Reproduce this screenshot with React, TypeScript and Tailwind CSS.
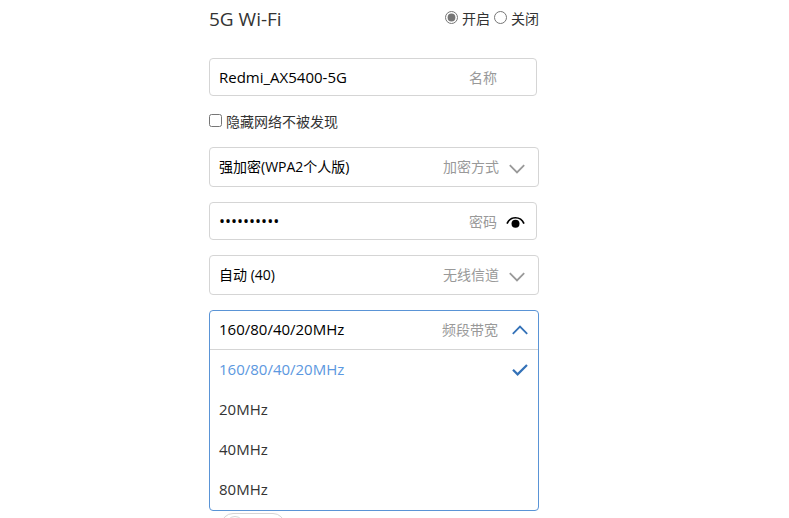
import React from 'react';

const CHANNELS = ['自动 (40)', '36', '40', '44', '48', '149', '153'];
const ENCRYPTIONS = ['强加密(WPA2个人版)', '混合加密(WPA/WPA2个人版)', '无加密'];
const BANDWIDTHS = ['160/80/40/20MHz', '20MHz', '40MHz', '80MHz'];

const Chevron: React.FC<{ className: string }> = ({ className }) => (
  <svg viewBox="0 0 16 10" className={className} fill="none" stroke="currentColor" strokeWidth="1.8" aria-hidden="true">
    <path d="M0.8 1.2 8 8.4 15.2 1.2" />
  </svg>
);

const SelectField: React.FC<{ id: string; label: string; options: string[] }> = ({ id, label, options }) => (
  <div className="relative h-10">
    <select
      id={id}
      className="w-full h-full appearance-none rounded border border-[#d5d5d5] bg-white pl-[9px] pr-[100px] text-sm text-black outline-none"
    >
      {options.map((option) => (
        <option key={option}>{option}</option>
      ))}
    </select>
    <label htmlFor={id} className="pointer-events-none absolute right-10 top-[10px] text-sm text-[#999]">
      {label}
    </label>
    <Chevron className="pointer-events-none absolute right-[14px] top-[17px] w-4 h-[10px] text-[#999]" />
  </div>
);

const BandwidthSelect: React.FC = () => {
  const [isOpen, setIsOpen] = React.useState(true);
  const [value, setValue] = React.useState(BANDWIDTHS[0]);

  return (
    <div className="rounded border border-[#5a94d6] bg-white">
      <button
        type="button"
        aria-haspopup="listbox"
        aria-expanded={isOpen}
        onClick={() => setIsOpen(!isOpen)}
        className="flex w-full h-[38px] items-center pl-[9px] pr-[10px] text-left"
      >
        <span className="flex-1 text-[15px] text-black">{value}</span>
        <span className="mr-[14px] text-sm text-[#999]">频段带宽</span>
        <Chevron className="w-4 h-[10px] rotate-180 text-[#3472b8]" />
      </button>
      {isOpen && (
        <ul role="listbox" aria-label="频段带宽" className="border-t border-[#d5d5d5]">
          {BANDWIDTHS.map((option) => (
            <li key={option} role="option" aria-selected={option === value}>
              <button
                type="button"
                onClick={() => setValue(option)}
                className={`flex w-full h-10 items-center justify-between pl-[9px] pr-[10px] text-[15px] ${option === value ? 'text-[#5c98e0]' : 'text-[#333]'}`}
              >
                {option}
                {option === value && (
                  <svg viewBox="0 0 16 12" className="w-4 h-3 text-[#3472b8]" fill="none" stroke="currentColor" strokeWidth="2.2" aria-hidden="true">
                    <path d="M1 5.8 5.6 10.4 15 1" />
                  </svg>
                )}
              </button>
            </li>
          ))}
        </ul>
      )}
    </div>
  );
};

const App: React.FC = () => {
  const [showPassword, setShowPassword] = React.useState(false);

  return (
    <div className="max-h-screen overflow-hidden bg-white pl-[209px] font-['Open_Sans','Noto_Sans_CJK_SC',sans-serif] text-sm text-[#333]">
      <form className="w-full max-w-[330px]">
        {/* Header */}
        <div className="flex h-[58px] items-start justify-between pt-[5px]">
          <h2 className="text-[19px] leading-7">5G Wi-Fi</h2>
          <div className="flex gap-1 leading-7">
            <label className="flex items-center gap-1">
              <input type="radio" name="wifi" defaultChecked className="mb-[3px] w-[13px] h-[13px] accent-[#767676]" />
              开启
            </label>
            <label className="flex items-center gap-1">
              <input type="radio" name="wifi" className="mb-[3px] w-[13px] h-[13px]" />
              关闭
            </label>
          </div>
        </div>

        {/* Name */}
        <div className="relative mr-[2px] h-[38px]">
          <input
            id="ssid"
            type="text"
            defaultValue="Redmi_AX5400-5G"
            className="w-full h-full rounded border border-[#d5d5d5] pl-[9px] pr-[80px] text-[15px] text-black outline-none"
          />
          <label htmlFor="ssid" className="absolute right-10 top-[10px] text-sm text-[#999]">名称</label>
        </div>

        <label className="flex h-[51px] items-center gap-1">
          <input type="checkbox" className="mb-[3px] w-[13px] h-[13px]" />
          隐藏网络不被发现
        </label>

        {/* Security and radio */}
        <div className="flex flex-col gap-[15px]">
          <SelectField id="encryption" label="加密方式" options={ENCRYPTIONS} />

          <div className="relative mr-[2px] h-[38px]">
            <input
              id="password"
              type={showPassword ? 'text' : 'password'}
              defaultValue="redmi54005"
              className="w-full h-full rounded border border-[#d5d5d5] pl-[9px] pr-[80px] text-base text-black outline-none"
            />
            <label htmlFor="password" className="absolute right-10 top-[10px] text-sm text-[#999]">密码</label>
            <button
              type="button"
              aria-label="显示密码"
              onClick={() => setShowPassword(!showPassword)}
              className="absolute right-3 top-[13px]"
            >
              <svg viewBox="0 0 20 14" className="w-5 h-[14px]" aria-hidden="true">
                <path d="M2 8.6C5.5 0.8 15.5 0.8 19 8.6" fill="none" stroke="black" strokeWidth="1.7" />
                <circle cx="10.5" cy="8.8" r="4" fill="black" />
              </svg>
            </button>
          </div>

          <SelectField id="channel" label="无线信道" options={CHANNELS} />
          <BandwidthSelect />
        </div>

        <div className="mt-[2px] ml-3">
          <button type="button" role="switch" aria-checked="false" aria-label="5G Wi-Fi" className="flex w-16 h-6 items-center rounded-full border border-[#d5d5d5] px-1">
            <span className="w-[18px] h-[18px] rounded-full border border-[#d5d5d5]" />
          </button>
        </div>
      </form>
    </div>
  );
};

export default App;
